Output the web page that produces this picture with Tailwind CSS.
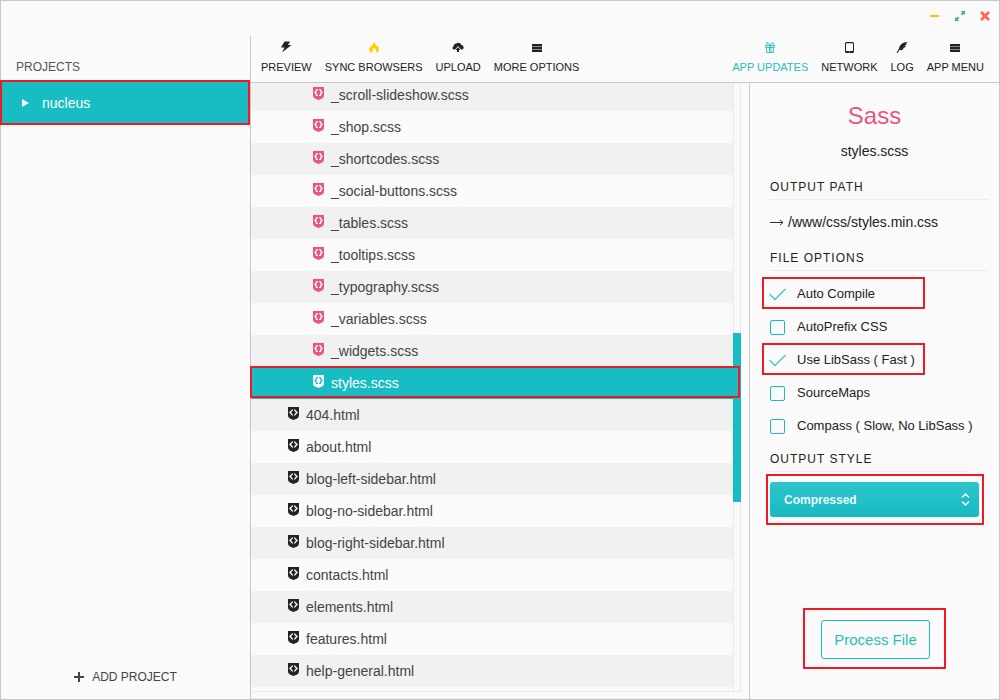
<!DOCTYPE html>
<html lang="en">
<head>
<meta charset="utf-8">
<title>Projects</title>
<script src="https://cdn.jsdelivr.net/npm/@tailwindcss/browser@4"></script>
</head>
<body class="h-screen overflow-hidden bg-[#fafafa] font-['Liberation_Sans',Arial,sans-serif] text-[#222]">
<svg class="hidden">
  <symbol id="shield-html" viewBox="0 0 11 13"><path fill-rule="evenodd" d="M0 0h11v8.500Q10.900 10.500 9.200 11.400L5.500 13 1.800 11.400Q.1 10.500 0 8.500zM4.700 1.800 1 5.500l3.700 3.700V7.300L3 5.500 4.700 3.700zM6.300 1.800v1.900L8 5.500 6.300 7.300v1.900L10 5.500z"/></symbol>
  <symbol id="shield-scss" viewBox="0 0 11 13"><path d="M0 0h11v8.500Q10.900 10.500 9.200 11.400L5.500 13 1.800 11.400Q.1 10.500 0 8.500z"/><path fill="none" stroke="currentColor" stroke-width="1.300" d="M4.900 2.600H4Q3.200 2.600 3.200 3.500v1L2 5.500l1.200 1v1q0 .9.8.9h.9M6.100 2.600H7q.8 0 .8.900v1L9 5.500l-1.200 1v1q0 .9-.8.9h-.9"/></symbol>
  <symbol id="bars" viewBox="0 0 10 9"><path fill="#8a8a8a" d="M0 0h10v8H0z"/><path d="M0 0h10v2H0zM0 3h10v2H0zM0 6h10v2H0z"/></symbol>
</svg>
<div class="flex h-full flex-col border border-[#c8c8c8]">
  <header class="flex h-[35px] shrink-0 items-center justify-end gap-[13px] pr-2 pb-[5px]">
    <button aria-label="Minimize" class="flex size-3 items-center justify-center"><svg class="size-3" viewBox="0 0 12 12"><path d="M1 5h9v2H1z" fill="#ffc000"/></svg></button>
    <button aria-label="Maximize" class="flex size-3 items-center justify-center"><svg class="size-3" viewBox="0 0 12 12" fill="#1fc95b"><path d="M7 1h4v4L9.700 3.700 8 5.400 6.700 4.100 8.300 2.400zM5 11H1V7l1.300 1.300L4 6.600l1.300 1.300-1.700 1.700z"/></svg></button>
    <button aria-label="Close" class="flex size-3 items-center justify-center"><svg class="size-3" viewBox="0 0 12 12"><path d="M2 2l8 8M10 2l-8 8" stroke="#ff6350" stroke-width="2.600"/></svg></button>
  </header>

  <div class="flex min-h-0 flex-1">
    <aside class="flex w-[250px] shrink-0 flex-col border-r border-[#c8c8c8]">
      <h2 class="px-[15px] pt-[23px] pb-[5px] text-xs leading-4 text-[#555]">PROJECTS</h2>
      <div class="relative">
        <button class="flex h-[45px] w-full items-center gap-3 bg-[#18bdc4] pl-5 text-left text-sm text-white">
          <svg class="h-[9px] w-[9px]" viewBox="0 0 9 9"><path d="M1 1l7 4L1 9z" fill="#fff"/></svg><span>nucleus</span>
        </button>
        <div class="pointer-events-none absolute inset-y-0 -left-px right-0 border-2 border-[#ed1c24]"></div>
      </div>
      <button class="mt-auto flex items-center justify-center gap-2 pb-[14px] text-xs leading-4 text-[#444]">
        <svg class="size-[10px]" viewBox="0 0 10 10"><path d="M4 0h2v4h4v2H6v4H4V6H0V4h4z" fill="#444"/></svg>ADD PROJECT
      </button>
    </aside>

    <div class="flex min-w-0 flex-1 flex-col">
      <nav class="flex h-[47px] shrink-0 items-start justify-between border-b border-[#c8c8c8] pt-1 pr-[15px] pl-[10px] text-[11px] leading-4">
        <div class="flex gap-[13px]">
          <button class="flex flex-col items-center gap-[3px]"><svg class="h-4 w-3" viewBox="0 0 12 16" fill="#222"><path d="M4.500 1.500H10L8 5h3.500L2 12.500l2.500-5H1z"/></svg>PREVIEW</button>
          <button class="flex flex-col items-center gap-[3px]"><svg class="h-4 w-3" viewBox="0 0 12 16" fill="#ffd000"><path fill-rule="evenodd" d="M5.500 2C8 3.500 8.200 5.300 8 7l1.400-1.800C10.800 7 11.500 9 10.500 11 9.800 12.600 8.300 13 8 13c1-2 0-3.500-2-5.500C5.700 9.500 3.500 11 4.300 13 1.500 12.500.5 10.500 1.200 8.500 2 6.500 5.800 5.500 5.500 2z"/></svg>SYNC BROWSERS</button>
          <button class="flex flex-col items-center gap-[3px]"><svg class="h-4 w-3" viewBox="0 0 12 16" fill="#222"><path d="M2 9.500C0 9 0 7 1.600 6.400 1.600 4.500 3 3.300 4.500 3.400 6 2 8.800 2.700 9.300 5 12 5.200 12.500 9 10 9.500H9L6 6 3 9.500z"/><path d="M6 7l2.300 3H7v2H5v-2H3.700z"/></svg>UPLOAD</button>
          <button class="flex flex-col items-center gap-[3px]"><svg class="h-4 w-[10px] pt-1 pb-[3px]" fill="#222"><use href="#bars"/></svg>MORE OPTIONS</button>
        </div>
        <div class="flex gap-[13px]">
          <button class="flex flex-col items-center gap-[3px] text-[#2bbcc3]"><svg class="h-4 w-3" viewBox="0 0 12 16" fill="none" stroke="currentColor"><path d="M1.500 5.500h9v2h-9zM2.500 7.500v5h7v-5M5.500 5.500v7M7 5.500v7M6 5L4 2.500 2.500 3 3 5M6 5l2-2.500 1.500.5L9 5" stroke-width=".9"/></svg>APP UPDATES</button>
          <button class="flex flex-col items-center gap-[3px]"><svg class="h-4 w-[9px]" viewBox="0 0 9 16"><path fill="#222" fill-rule="evenodd" d="M1 2h7l1 1v9l-1 1H1l-1-1V3zM1 3.200v7.800h7V3.200zM4 11.600h1v.7H4z"/></svg>NETWORK</button>
          <button class="flex flex-col items-center gap-[3px]"><svg class="h-4 w-3" viewBox="0 0 12 16"><path fill="#222" d="M11.500 2C7 2.200 3.800 4.500 3 8.500L.5 13h1L3.500 10c2.300.2 3.600-.4 4.300-1.500L6.500 8.300 9 7.200c.4-.5.6-.8.7-1.300L8.300 6l2.500-1.500-.9-.3z"/></svg>LOG</button>
          <button class="flex flex-col items-center gap-[3px]"><svg class="h-4 w-[10px] pt-1 pb-[3px]" fill="#222"><use href="#bars"/></svg>APP MENU</button>
        </div>
      </nav>

      <div class="flex min-h-0 flex-1">
        <main class="flex min-w-0 flex-1 flex-col">
          <div class="relative flex min-h-0 flex-1">
            <div class="min-w-0 flex-1 overflow-hidden">
              <ul id="files" class="-mt-1 text-sm text-[#444]"></ul>
            </div>
            <div class="w-2 shrink-0 border-x border-[#ebebeb]"></div>
            <div class="absolute top-[250px] right-0 h-[169px] w-2 bg-[#18bdc4]"></div>
            <div class="pointer-events-none absolute top-[283px] right-px -left-px h-8 border-2 border-[#ed1c24]"></div>
          </div>
          <div class="h-2 shrink-0 border-y border-[#ebebeb]"></div>
        </main>

        <section class="ml-2 flex w-[250px] shrink-0 flex-col border-l border-[#c8c8c8] text-[13px]">
          <h1 class="mt-[17px] text-center text-2xl leading-8 text-[#e8557f]">Sass</h1>
          <p class="mt-[11px] text-center text-sm leading-4">styles.scss</p>
          <h2 class="mt-5 mr-[11px] ml-5 border-b border-[#ebebeb] pb-1 text-xs leading-4 tracking-[1px]">OUTPUT PATH</h2>
          <p class="mt-[14px] ml-5 flex items-center gap-1 text-sm leading-4"><svg class="h-[7px] w-[14px]" viewBox="0 0 14 7" fill="none" stroke="#333"><path d="M0 3.500h13M10 1l3 2.500L10 6"/></svg>/www/css/styles.min.css</p>
          <h2 class="mt-5 mr-[11px] ml-5 border-b border-[#ebebeb] pb-1 text-xs leading-4 tracking-[1px]">FILE OPTIONS</h2>
          <div id="options" class="mt-[6px] ml-3 flex flex-col items-start gap-px"></div>
          <h2 class="mt-[10px] mr-[31px] ml-5 border-b border-[#ebebeb] pb-1 text-xs leading-4 tracking-[1px]">OUTPUT STYLE</h2>
          <div class="mt-[2px] mr-[15px] ml-4 border-2 border-[#ed1c24] py-[6px] pr-[3px] pl-[2px]">
            <div class="relative">
              <select aria-label="Output style" class="h-[35px] w-full appearance-none rounded-[3px] bg-linear-to-b from-[#2cc5cb] to-[#17bac2] px-[14px] text-xs font-bold text-[#effafa]"><option>Compressed</option><option>Nested</option></select>
              <svg class="pointer-events-none absolute top-[11px] right-[9px] h-[13px] w-[9px]" viewBox="0 0 9 13" fill="none" stroke="#fff" stroke-width="1.500"><path d="M1 4.500L4.500 1 8 4.500M1 8.500L4.500 12 8 8.500"/></svg>
            </div>
          </div>
          <div class="mt-auto mb-[30px] self-center border-2 border-[#ed1c24] pt-[10px] pr-[14px] pb-2 pl-4">
            <button class="h-[39px] rounded-[3px] border border-[#18bdc4] px-3 pt-[2px] text-[15px] text-[#2bbcc3]">Process File</button>
          </div>
        </section>
      </div>
    </div>
  </div>
</div>
<script>
const files = ["_scroll-slideshow.scss","_shop.scss","_shortcodes.scss","_social-buttons.scss","_tables.scss","_tooltips.scss","_typography.scss","_variables.scss","_widgets.scss","styles.scss","404.html","about.html","blog-left-sidebar.html","blog-no-sidebar.html","blog-right-sidebar.html","contacts.html","elements.html","features.html","help-general.html"];
document.getElementById("files").innerHTML = files.map(f => {
  const scss = f.endsWith(".scss"), active = f === "styles.scss";
  const row = active ? "bg-[#18bdc4] text-white" : "odd:bg-[#f1f1f1]";
  const icon = active ? "fill-white text-[#18bdc4]" : scss ? "fill-[#e8557f] text-white" : "fill-[#222]";
  return `<li class="flex h-8 items-center gap-[7px] ${scss ? "pl-[62px]" : "pl-[37px]"} ${row}"><svg class="mb-1 h-[13px] w-[11px] ${icon}"><use href="#shield-${scss ? "scss" : "html"}"/></svg><span>${f}</span></li>`;
}).join("");
const options = [["Auto Compile",1],["AutoPrefix CSS",0],["Use LibSass ( Fast )",1],["SourceMaps",0],["Compass ( Slow, No LibSass )",0]];
document.getElementById("options").innerHTML = options.map(([name,on],i) =>
  `<label class="flex h-8 items-center gap-3 border-2 pt-[2px] pl-[6px] ${on ? "w-[163px] border-[#ed1c24]" : "border-transparent"}"><span class="relative size-[15px]"><input id="opt${i}" type="checkbox" ${on ? "checked" : ""} class="peer block size-[15px] appearance-none rounded-[2px] border border-[#18bdc4] checked:border-transparent"><svg class="pointer-events-none absolute inset-0 hidden size-[15px] overflow-visible peer-checked:block" viewBox="0 0 15 15" fill="none" stroke="#3fc6cc" stroke-width="1.300"><path d="M-.5 7l5.500 5.500L15.500 2"/></svg></span><span>${name}</span></label>`).join("");
</script>
</body>
</html>
